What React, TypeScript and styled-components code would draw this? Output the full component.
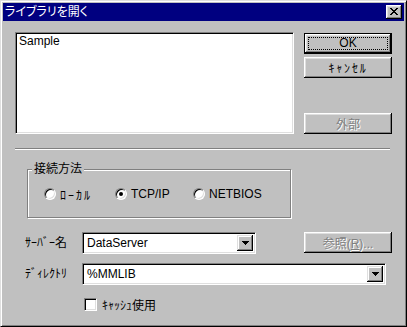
import styled, { createGlobalStyle } from "styled-components";

// GLOBAL ----------------------------------->

const GlobalStyle = createGlobalStyle`
  html, body {
    margin: 0;
    padding: 0;
    background: #c0c0c0;
  }
  * {
    box-sizing: border-box;
  }
  body {
    font-family: "Liberation Sans", "Noto Sans CJK JP", sans-serif;
    font-size: 12px;
    font-feature-settings: "palt";
    color: #000;
  }
`;

// STYLED COMPONENTS ----------------------------------->

const Window = styled.div`
  width: 407px;
  height: 327px;
  display: flex;
  flex-direction: column;
  background: #c0c0c0;
  border: 1px solid;
  border-color: #dfdfdf #000 #000 #dfdfdf;
  box-shadow: inset 1px 1px #fff, inset -1px -1px #808080;
  padding: 2px;
`;

const TitleBar = styled.div`
  height: 18px;
  background: #000080;
  color: #fff;
  display: flex;
  align-items: center;
  justify-content: space-between;
  padding: 0 2px;
`;

const Title = styled.span`
  line-height: 14px;
`;

const CloseButton = styled.div`
  width: 16px;
  height: 14px;
  background: #c0c0c0;
  display: flex;
  align-items: center;
  justify-content: center;
  box-shadow: inset -1px -1px #000, inset 1px 1px #fff, inset -2px -2px #808080,
    inset 2px 2px #dfdfdf;
  padding-bottom: 1px;
`;

const Body = styled.div`
  flex: 1;
  display: flex;
  flex-direction: column;
  padding: 11px 12px 0 12px;
`;

const TopRow = styled.div`
  display: flex;
  gap: 10px;
`;

const ListBox = styled.div`
  width: 279px;
  height: 102px;
  background: #fff;
  border: 1px solid;
  border-color: #808080 #fff #fff #808080;
  box-shadow: inset 1px 1px #000, inset -1px -1px #dfdfdf;
  padding: 2px 2px 2px 3px;
`;

const ListItem = styled.div`
  line-height: 13px;
`;

const ButtonColumn = styled.div`
  width: 88px;
  display: flex;
  flex-direction: column;
  gap: 3px;
  padding-top: 1px;
`;

const Button = styled.div<{ $default?: boolean; $disabled?: boolean }>`
  position: relative;
  height: 21px;
  display: flex;
  align-items: center;
  justify-content: center;
  background: #c0c0c0;
  color: ${(p) => (p.$disabled ? "#808080" : "#000")};
  text-shadow: ${(p) => (p.$disabled ? "1px 1px 0 #fff" : "none")};
  border: ${(p) => (p.$default ? "1px solid #000" : "none")};
  box-shadow: inset -1px -1px #000, inset 1px 1px #fff, inset -2px -2px #808080,
    inset 2px 2px #dfdfdf;
  padding-bottom: 1px;

  ${(p) =>
    p.$default &&
    `
    &::before {
      content: "";
      position: absolute;
      inset: 3px;
      border: 1px dotted #000;
    }
  `}
`;

// half-width kana that MS UI Gothic draws wider than Noto does
const Kana = styled.span<{ $spacing: number }>`
  letter-spacing: ${(p) => p.$spacing}px;
`;

const PushDown = styled.div`
  margin-top: auto;
`;

const Separator = styled.div`
  height: 2px;
  margin: 14px 2px 0 0;
  border-top: 1px solid #808080;
  border-bottom: 1px solid #fff;
`;

const GroupBox = styled.div`
  position: relative;
  width: 264px;
  height: 49px;
  margin: 19px 0 0 12px;
  border: 1px solid #808080;
  box-shadow: inset 1px 1px #fff, 1px 1px #fff;
  display: flex;
  align-items: center;
  padding: 1px 0 0 16px;
`;

const GroupLabel = styled.span`
  position: absolute;
  top: -8px;
  left: 4px;
  padding: 0 2px;
  line-height: 14px;
  background: #c0c0c0;
`;

const RadioItem = styled.label<{ $width?: number }>`
  display: flex;
  align-items: center;
  gap: 4px;
  width: ${(p) => (p.$width ? `${p.$width}px` : "auto")};
`;

const RadioCircle = styled.span<{ $checked?: boolean }>`
  position: relative;
  width: 12px;
  height: 12px;
  border-radius: 50%;
  background: #fff;
  border: 1px solid;
  border-color: #808080 #fff #fff #808080;
  box-shadow: inset 1px 1px #000, inset -1px -1px #dfdfdf;

  &::after {
    content: "";
    display: ${(p) => (p.$checked ? "block" : "none")};
    position: absolute;
    left: 3px;
    top: 3px;
    width: 4px;
    height: 4px;
    border-radius: 50%;
    background: #000;
  }
`;

const FieldRow = styled.div<{ $top: number }>`
  display: flex;
  align-items: flex-start;
  margin-top: ${(p) => p.$top}px;
  padding-left: 10px;
`;

const FieldLabel = styled.span`
  width: 57px;
  line-height: 22px;
`;

const Combo = styled.div<{ $width: number }>`
  width: ${(p) => p.$width}px;
  height: 22px;
  display: flex;
  background: #fff;
  border: 1px solid;
  border-color: #808080 #fff #fff #808080;
  box-shadow: inset 1px 1px #000, inset -1px -1px #dfdfdf;
  padding: 2px;
`;

const ComboText = styled.span`
  flex: 1;
  line-height: 17px;
  padding-left: 2px;
`;

const ComboArrow = styled.span`
  width: 16px;
  height: 16px;
  display: flex;
  align-items: center;
  justify-content: center;
  background: #c0c0c0;
  box-shadow: inset -1px -1px #000, inset 1px 1px #dfdfdf, inset -2px -2px #808080,
    inset 2px 2px #fff;
`;

const SideButton = styled(Button)`
  width: 88px;
  margin-left: auto;
`;

const CheckRow = styled.label`
  display: flex;
  align-items: center;
  gap: 5px;
  margin-top: 11px;
  padding-left: 69px;
`;

const CheckBox = styled.span`
  width: 13px;
  height: 13px;
  background: #fff;
  border: 1px solid;
  border-color: #808080 #fff #fff #808080;
  box-shadow: inset 1px 1px #000, inset -1px -1px #dfdfdf;
`;

// ICONS ----------------------------------->

const CloseIcon = () => (
  <svg width="8" height="7" viewBox="0 0 8 7" shapeRendering="crispEdges">
    <path
      fill="#000"
      d="M0 0h2v1H0zM6 0h2v1H6zM1 1h2v1H1zM5 1h2v1H5zM2 2h4v1H2zM3 3h2v1H3zM2 4h4v1H2zM1 5h2v1H1zM5 5h2v1H5zM0 6h2v1H0zM6 6h2v1H6z"
    />
  </svg>
);

const ArrowIcon = () => (
  <svg width="7" height="4" viewBox="0 0 7 4" shapeRendering="crispEdges">
    <path fill="#000" d="M0 0h7v1H0zM1 1h5v1H1zM2 2h3v1H2zM3 3h1v1H3z" />
  </svg>
);

// FUNCTIONAL COMPONENT ----------------------------------->

const modes = [
  { label: <Kana $spacing={2}>ﾛｰｶﾙ</Kana>, width: 71, checked: false },
  { label: "TCP/IP", width: 78, checked: true },
  { label: "NETBIOS", width: 0, checked: false },
];

const App = () => {
  return (
    <>
      <GlobalStyle />
      <Window>
        <TitleBar>
          <Title>ライブラリを開く</Title>
          <CloseButton>
            <CloseIcon />
          </CloseButton>
        </TitleBar>
        <Body>
          <TopRow>
            <ListBox>
              <ListItem>Sample</ListItem>
            </ListBox>
            <ButtonColumn>
              <Button $default>OK</Button>
              <Button>
                <Kana $spacing={1.8}>ｷｬﾝｾﾙ</Kana>
              </Button>
              <PushDown>
                <Button $disabled>外部</Button>
              </PushDown>
            </ButtonColumn>
          </TopRow>
          <Separator />
          <GroupBox>
            <GroupLabel>接続方法</GroupLabel>
            {modes.map((m, idx) => (
              <RadioItem key={idx} $width={m.width}>
                <RadioCircle $checked={m.checked} />
                {m.label}
              </RadioItem>
            ))}
          </GroupBox>
          <FieldRow $top={14}>
            <FieldLabel>ｻｰﾊﾞｰ名</FieldLabel>
            <Combo $width={174}>
              <ComboText>DataServer</ComboText>
              <ComboArrow>
                <ArrowIcon />
              </ComboArrow>
            </Combo>
            <SideButton $disabled>
              <span>
                参照(<u>R</u>)...
              </span>
            </SideButton>
          </FieldRow>
          <FieldRow $top={9}>
            <FieldLabel>ﾃﾞｨﾚｸﾄﾘ</FieldLabel>
            <Combo $width={304}>
              <ComboText>%MMLIB</ComboText>
              <ComboArrow>
                <ArrowIcon />
              </ComboArrow>
            </Combo>
          </FieldRow>
          <CheckRow>
            <CheckBox />
            ｷｬｯｼｭ使用
          </CheckRow>
        </Body>
      </Window>
    </>
  );
};

export default App;
